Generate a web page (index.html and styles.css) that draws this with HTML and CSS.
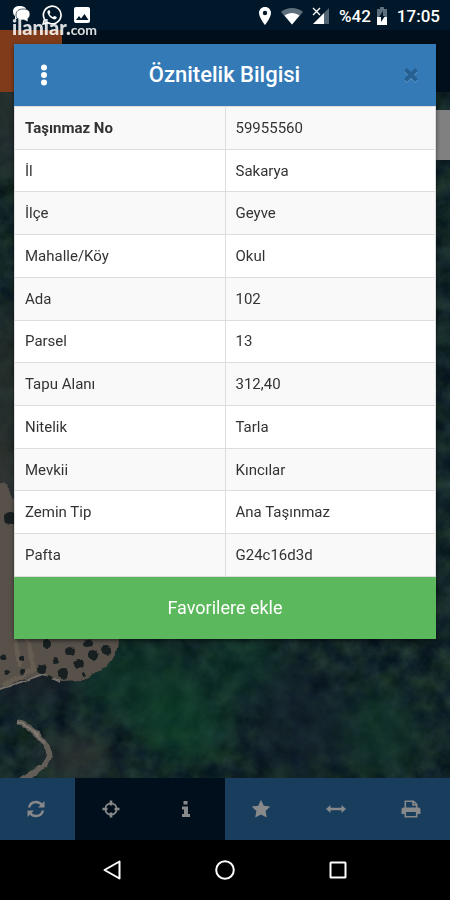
FILE: index.html
```html
<!DOCTYPE html>
<html lang="tr">
  <head>
    <meta charset="UTF-8" />
    <meta name="viewport" content="width=device-width, initial-scale=1.0" />
    <title>Öznitelik Bilgisi</title>
    <link rel="stylesheet" href="styles.css">
  </head>
  <body>
    <div class="screen">
      <header class="status-bar">
        <div class="status-group">
          <svg class="status-icon" width="20" height="20" viewBox="0 0 20 20" fill="#fff">
            <path d="M8 1C3.500 1 1 3 1 6.500c0 2 .8 3.500 2 4.500v4l3-2.500C10 14 15 12 15 7 15 3 12 1 8 1z"/>
            <path d="M11 4c5 0 7 2 7 5 0 2-1 3.500-2 4.500V17l-4-2c-5 .5-8-1.500-8-5 0-4 3-6 7-6z" stroke="#001829" stroke-width=".7"/>
          </svg>
          <svg class="status-icon" width="20" height="20" viewBox="0 0 20 20">
            <path d="M1.200 19l1.300-4.800A8.800 8.800 0 1 1 6 17.700z" fill="none" stroke="#fff" stroke-width="1.700"/>
            <path d="M7 5c-1 .3-2 1.600-1.500 3 1 3 3.200 5.300 6.300 6.300 1.400.4 2.800-.5 3-1.700.1-.6-2.300-1.800-2.800-1.500l-.9 1.100C9.300 11.500 8.200 10.300 7.500 9l.8-1.200C8.500 7.200 7.700 5 7 5z" fill="#fff"/>
          </svg>
          <svg class="status-icon" width="20" height="20" viewBox="0 0 20 20">
            <rect x="2" y="2" width="16" height="16" rx="2" fill="#fff"/>
            <path d="M4 15l3-4 2 2.500L12.500 9l4 6z" fill="#001829"/>
          </svg>
        </div>
        <div class="status-group status-right">
          <svg width="14" height="18" viewBox="0 0 14 18">
            <path d="M7 0C3.400 0 1 2.700 1 6c0 4.500 6 12 6 12s6-7.500 6-12c0-3.300-2.400-6-6-6zm0 3.800A2.200 2.200 0 1 1 7 8.200a2.200 2.200 0 0 1 0-4.400z" fill="#fff"/>
          </svg>
          <svg width="22" height="18" viewBox="0 0 22 18">
            <path d="M0 5C6-.5 16-.5 22 5L11 17.500z" fill="#5d6f7c"/>
            <path d="M3.500 8.500c4.500-3.500 10.500-3.500 15 0L11 17.500z" fill="#fff"/>
          </svg>
          <svg width="18" height="18" viewBox="0 0 18 18">
            <path d="M17 1v16h-5V6z" fill="#536572"/>
            <path d="M1 17L12 6v11z" fill="#fff"/>
            <path d="M1 1l7 7M8 1L1 8" stroke="#fff" stroke-width="1.300"/>
          </svg>
          <div class="battery">
            <span class="status-text">%42</span>
            <svg width="12" height="18" viewBox="0 0 12 18">
              <path d="M4 0h4v2h3v8H1V2h3z" fill="#5d6f7c"/>
              <path d="M1 10h10v8H1z" fill="#fff"/>
              <path d="M7 4l-4 6h2v5l4-6H7z" fill="#001829"/>
            </svg>
          </div>
          <time class="status-text">17:05</time>
        </div>
      </header>

      <div class="watermark"><b>ilanlar.</b><span>com</span></div>

      <div class="app-header"><div class="app-menu"></div></div>

      <main class="map">
        <svg class="terrain" viewBox="0 0 450 686" preserveAspectRatio="xMidYMid slice" aria-hidden="true">
          <defs>
            <filter id="forest" x="0" y="0" width="100%" height="100%" color-interpolation-filters="sRGB">
              <feTurbulence type="fractalNoise" baseFrequency="0.055" numOctaves="4" seed="8"/>
              <feColorMatrix values="0.16 0.04 0 0 -0.025  0.20 0.08 0 0 0.010  0.14 0 0.08 0 0.045  0 0 0 0 1"/>
            </filter>
            <filter id="rough" x="-10%" y="-10%" width="120%" height="120%" color-interpolation-filters="sRGB">
              <feTurbulence type="fractalNoise" baseFrequency="0.120" numOctaves="2" seed="3"/>
              <feDisplacementMap in="SourceGraphic" scale="5" xChannelSelector="R" yChannelSelector="G"/>
              <feGaussianBlur stdDeviation="0.7"/>
            </filter>
            <filter id="soft" x="-50%" y="-50%" width="200%" height="200%" color-interpolation-filters="sRGB">
              <feGaussianBlur stdDeviation="14"/>
            </filter>
          </defs>
          <rect width="450" height="686" filter="url(#forest)"/>
          <g filter="url(#soft)">
            <ellipse cx="140" cy="590" rx="60" ry="40" fill="#0d4029" opacity=".5"/>
            <ellipse cx="185" cy="635" rx="45" ry="35" fill="#0c4b2b" opacity=".5"/>
            <ellipse cx="240" cy="570" rx="40" ry="40" fill="#0d402e" opacity=".4"/>
            <ellipse cx="380" cy="640" rx="40" ry="45" fill="#123c2c" opacity=".5"/>
            <ellipse cx="300" cy="630" rx="50" ry="60" fill="#111d2c" opacity=".5"/>
            <ellipse cx="30" cy="580" rx="45" ry="28" fill="#1b1f2b" opacity=".8"/>
            <ellipse cx="4" cy="30" rx="18" ry="60" fill="#303335" opacity=".7"/>
            <ellipse cx="4" cy="300" rx="18" ry="90" fill="#30332f" opacity=".7"/>
            <ellipse cx="4" cy="400" rx="18" ry="60" fill="#3e3b38" opacity=".8"/>
            <ellipse cx="75" cy="665" rx="35" ry="18" fill="#3e3d3b" opacity=".7"/>
          </g>
          <g filter="url(#rough)">
            <path d="M-5 390l12 2 8 20v130h103c1 18-5 28-15 35l-22 11-18 1-20-7-23 6-25 10z" fill="#57514a"/>
            <path d="M27 545l7 32-30 17M15 545l4 30" fill="none" stroke="#706559" stroke-width="4" opacity=".6"/>
            <path d="M-5 599l48-17 18 8" fill="none" stroke="#77716b" stroke-width="2"/>
            <g fill="#171f20">
              <circle cx="10" cy="427" r="6"/><circle cx="47" cy="552" r="4"/>
              <circle cx="70" cy="559" r="5"/><circle cx="88" cy="551" r="4"/>
              <circle cx="93" cy="563" r="5"/><circle cx="106" cy="558" r="5"/>
              <circle cx="79" cy="572" r="5"/><circle cx="63" cy="582" r="5"/>
              <circle cx="42" cy="577" r="4"/><circle cx="55" cy="568" r="3"/>
              <circle cx="21" cy="566" r="3"/><circle cx="3" cy="565" r="3"/>
              <circle cx="6" cy="580" r="3"/><circle cx="22" cy="580" r="3"/>
              <circle cx="84" cy="582" r="2"/><circle cx="50" cy="586" r="3"/>
            </g>
            <path d="M18 630c14 5 21 14 27 21 12 15-3 26-24 38" fill="none" stroke="#625d57" stroke-width="6"/>
            <path d="M18 630c14 5 21 14 27 21" fill="none" stroke="#827a73" stroke-width="2"/>
          </g>
        </svg>
        <div class="map-control"></div>
      </main>

      <nav class="toolbar">
        <button class="tool" type="button" aria-label="Yenile">
          <svg width="18" height="18" viewBox="0 0 18 18" fill="none" stroke="currentColor" stroke-width="2.500">
            <path d="M2 7.500C3 4 6 2 9 2c2.500 0 4.500 1 6 3M16 10.500C15 14 12 16 9 16c-2.500 0-4.500-1-6-3"/>
            <path d="M17.500 1v6.500H11zM.5 17v-6.500H7z" fill="currentColor" stroke="none"/>
          </svg>
        </button>
        <button class="tool active" type="button" aria-label="Konum">
          <svg width="18" height="18" viewBox="0 0 18 18" fill="none" stroke="currentColor">
            <circle cx="9" cy="9" r="5.700" stroke-width="1.700"/>
            <path d="M9 .5v5M9 12.500v5M.5 9h5M12.500 9h5" stroke-width="2.600"/>
          </svg>
        </button>
        <button class="tool active" type="button" aria-label="Bilgi">
          <svg width="18" height="18" viewBox="0 0 18 18" fill="currentColor">
            <path d="M6.500 1h4v3.500h-4zM5 6.500h6V14h2v3H5v-3h2V9.500H5z"/>
          </svg>
        </button>
        <button class="tool" type="button" aria-label="Favoriler">
          <svg width="20" height="20" viewBox="0 0 20 20" fill="currentColor">
            <path d="M10 .8l2.800 5.900 6.500.9-4.700 4.500 1.200 6.400-5.800-3-5.800 3 1.200-6.400L.7 7.600l6.500-.9z"/>
          </svg>
        </button>
        <button class="tool" type="button" aria-label="Mesafe ölç">
          <svg width="20" height="18" viewBox="0 0 20 18" fill="currentColor">
            <path d="M0 9l4.500-4v2.700h11V5L20 9l-4.500 4v-2.700h-11V13z"/>
          </svg>
        </button>
        <button class="tool" type="button" aria-label="Yazdır">
          <svg width="20" height="18" viewBox="0 0 20 18">
            <path d="M4.300 8V1.200h8.200l3.200 3.200V8M12 1.200V5h3.700" fill="none" stroke="currentColor" stroke-width="1.600"/>
            <path d="M2.500 7.500h15a2 2 0 0 1 2 2V14h-4v-2h-11v2h-4V9.500a2 2 0 0 1 2-2z" fill="currentColor"/>
            <path d="M4.300 12v4.700h11.400V12" fill="none" stroke="currentColor" stroke-width="1.600"/>
          </svg>
        </button>
      </nav>

      <nav class="system-nav">
        <button class="nav-button" type="button" aria-label="Geri">
          <svg width="20" height="20" viewBox="0 0 20 20"><path d="M17.500 1.500v17L2.500 10z"/></svg>
        </button>
        <button class="nav-button" type="button" aria-label="Ana ekran">
          <svg width="20" height="20" viewBox="0 0 20 20"><circle cx="10" cy="10" r="8.800"/></svg>
        </button>
        <button class="nav-button" type="button" aria-label="Son uygulamalar">
          <svg width="20" height="20" viewBox="0 0 20 20"><rect x="2.500" y="2.500" width="15" height="15" rx=".5"/></svg>
        </button>
      </nav>

      <section class="modal" role="dialog" aria-labelledby="modalTitle">
        <div class="modal-header">
          <button class="modal-button" type="button" aria-label="Menü">
            <svg width="8" height="22" viewBox="0 0 8 22" fill="#fff">
              <circle cx="4" cy="3.500" r="3"/><circle cx="4" cy="11" r="3"/><circle cx="4" cy="18.500" r="3"/>
            </svg>
          </button>
          <h1 class="modal-title" id="modalTitle">Öznitelik Bilgisi</h1>
          <button class="modal-button" type="button" aria-label="Kapat">
            <svg width="16" height="16" viewBox="0 0 16 16">
              <path d="M2.500 3.500l11 11M13.500 3.500l-11 11" stroke="#5b9bd0" stroke-width="4"/>
              <path d="M2.500 2.500l11 11M13.500 2.500l-11 11" stroke="#275f91" stroke-width="4"/>
            </svg>
          </button>
        </div>
        <table class="info-table">
          <tbody>
            <tr><th scope="row">Taşınmaz No</th><td>59955560</td></tr>
            <tr><th scope="row">İl</th><td>Sakarya</td></tr>
            <tr><th scope="row">İlçe</th><td>Geyve</td></tr>
            <tr><th scope="row">Mahalle/Köy</th><td>Okul</td></tr>
            <tr><th scope="row">Ada</th><td>102</td></tr>
            <tr><th scope="row">Parsel</th><td>13</td></tr>
            <tr><th scope="row">Tapu Alanı</th><td>312,40</td></tr>
            <tr><th scope="row">Nitelik</th><td>Tarla</td></tr>
            <tr><th scope="row">Mevkii</th><td>Kıncılar</td></tr>
            <tr><th scope="row">Zemin Tip</th><td>Ana Taşınmaz</td></tr>
            <tr><th scope="row">Pafta</th><td>G24c16d3d</td></tr>
          </tbody>
        </table>
        <button class="favorite-button" type="button">Favorilere ekle</button>
      </section>
    </div>
  </body>
</html>
```

FILE: styles.css
```css
:root {
  --primary: #337ab7;
  --primary-dim: #193d5c;
  --success: #5cb85c;
  --night: #000f1b;
  --status: #001829;
  --text: #333;
  --border: #ddd;
}

* {
  box-sizing: border-box;
}

body {
  margin: 0;
  font-family: Roboto, "Liberation Sans", sans-serif;
  color: var(--text);
  background: #000;
}

button {
  border: 0;
  padding: 0;
  margin: 0;
  font-family: inherit;
  background: none;
  display: flex;
  align-items: center;
  justify-content: center;
}

svg {
  display: block;
}

.screen {
  position: relative;
  min-height: 100vh;
  display: flex;
  flex-direction: column;
}

.status-bar {
  height: 30px;
  padding: 0 10px 0 12px;
  display: flex;
  justify-content: space-between;
  align-items: center;
  background: var(--status);
  color: #fff;
}

.status-group {
  display: flex;
  align-items: center;
  gap: 10px;
}

.status-right {
  gap: 9px;
  padding-top: 2px;
}

.status-text {
  font-size: 17px;
  line-height: 20px;
  font-weight: 500;
}

.battery {
  display: flex;
  align-items: center;
  gap: 5px;
}

.watermark {
  position: absolute;
  top: 15px;
  left: 12px;
  z-index: 3;
  display: flex;
  align-items: baseline;
  color: rgba(255, 255, 255, 0.85);
  font-family: Lato, sans-serif;
  font-size: 20px;
  line-height: 24px;
}

.watermark b {
  font-weight: 900;
}

.watermark span {
  font-size: 14px;
  font-weight: 700;
}

.app-header {
  height: 62px;
  background: var(--night);
}

.app-menu {
  width: 62px;
  height: 100%;
  background: #803c1a;
}

.map {
  position: relative;
  flex: 1;
  display: flex;
  justify-content: flex-end;
  padding-top: 18px;
  overflow: hidden;
  background: #14272a;
}

.terrain {
  position: absolute;
  inset: 0;
  width: 100%;
  height: 100%;
}

.map-control {
  position: relative;
  width: 50px;
  height: 50px;
  background: #808080;
}

.toolbar {
  height: 62px;
  display: grid;
  grid-template-columns: repeat(6, 1fr);
  background: var(--primary-dim);
}

.tool {
  color: #87898a;
  padding-right: 3px;
}

.tool.active {
  background: var(--night);
}

.system-nav {
  height: 60px;
  padding: 0 56px;
  display: grid;
  grid-template-columns: repeat(3, 1fr);
  background: #000;
}

.nav-button svg {
  fill: none;
  stroke: #fff;
  stroke-width: 2;
  stroke-linejoin: round;
}

.modal {
  position: absolute;
  top: 44px;
  left: 14px;
  right: 14px;
  z-index: 2;
  background: #fff;
  box-shadow: 0 2px 4px rgba(0, 0, 0, 0.5);
}

.modal-header {
  height: 62px;
  padding: 0 7px 0 12px;
  display: flex;
  align-items: center;
  background: var(--primary);
}

.modal-button {
  width: 36px;
  height: 44px;
}

.modal-title {
  flex: 1;
  margin: 0;
  padding-right: 6px;
  text-align: center;
  color: #fff;
  font-size: 22px;
  line-height: 28px;
  font-weight: 500;
}

.info-table {
  width: 100%;
  height: 471px;
  border-collapse: collapse;
  table-layout: fixed;
  font-size: 15px;
  line-height: 20px;
}

.info-table th,
.info-table td {
  padding: 0 10px;
  border: 1px solid var(--border);
  text-align: left;
  font-weight: 400;
}

.info-table tr:nth-child(odd) {
  background: #f9f9f9;
}

.info-table tr:first-child th {
  font-weight: 700;
}

.favorite-button {
  width: 100%;
  height: 62px;
  color: #fff;
  font-size: 18px;
  line-height: 24px;
  background: var(--success);
}
```
